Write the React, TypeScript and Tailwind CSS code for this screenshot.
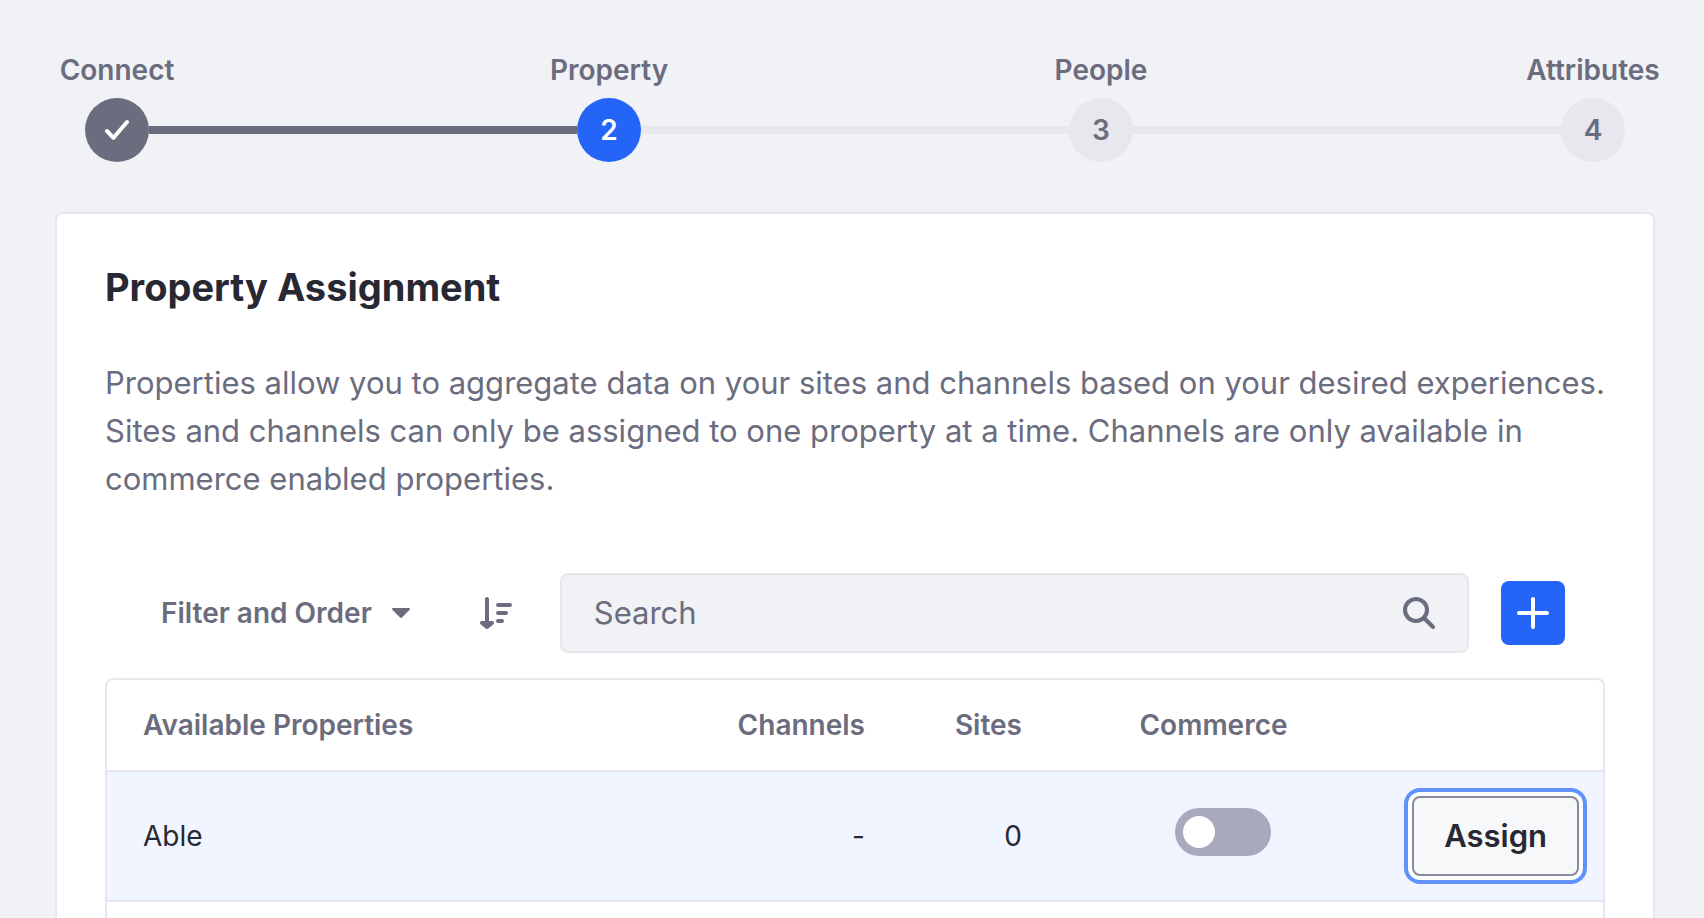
import { useState } from "react";

type StepState = "done" | "current" | "upcoming";

const steps: { label: string; state: StepState }[] = [
  { label: "Connect", state: "done" },
  { label: "Property", state: "current" },
  { label: "People", state: "upcoming" },
  { label: "Attributes", state: "upcoming" },
];

const circleStyles: Record<StepState, string> = {
  done: "bg-[#6b6c7e] text-white",
  current: "bg-[#2465f7] text-white",
  upcoming: "bg-[#e7e7ed] text-[#6b6c7e]",
};

function CheckIcon() {
  return (
    <svg className="size-6" viewBox="0 0 24 24" fill="none" stroke="currentColor" strokeWidth="4" strokeLinecap="round" strokeLinejoin="round" aria-hidden="true">
      <path d="M2 13 8.500 19.800 22 4" />
    </svg>
  );
}

function SortIcon() {
  return (
    <svg className="size-8" viewBox="0 0 32 32" fill="none" stroke="currentColor" strokeWidth="4" strokeLinecap="round" strokeLinejoin="round" aria-hidden="true">
      <path d="M7 2v26M18 8h12M18 16h8M18 24h4" />
      <path d="M2 26l5 4 5-4z" fill="currentColor" />
    </svg>
  );
}

function SearchIcon() {
  return (
    <svg className="size-8" viewBox="0 0 32 32" fill="none" stroke="currentColor" strokeWidth="4" strokeLinecap="round" aria-hidden="true">
      <circle cx="13" cy="13" r="11" />
      <path d="M22 22l8 8" />
    </svg>
  );
}

function PlusIcon() {
  return (
    <svg className="size-8" viewBox="0 0 32 32" fill="none" stroke="currentColor" strokeWidth="4" strokeLinecap="round" aria-hidden="true">
      <path d="M16 2v28M2 16h28" />
    </svg>
  );
}

function Stepper() {
  return (
    <ol className="mx-[30px] flex items-end">
      {steps.map((step, i) => (
        <li key={step.label} className={i > 0 ? "flex flex-1 items-end" : "flex items-end"}>
          {i > 0 && (
            <span className={`mb-7 h-2 flex-1 ${steps[i - 1].state === "done" ? "bg-[#6b6c7e]" : "bg-[#e7e7ed]"}`} />
          )}
          <div className="flex w-16 flex-col items-center gap-2">
            <span className="text-[28px] leading-10 font-semibold whitespace-nowrap text-[#6b6c7e]">{step.label}</span>
            <span className={`flex size-16 items-center justify-center rounded-full text-[28px] font-semibold ${circleStyles[step.state]}`}>
              {step.state === "done" ? <CheckIcon /> : i + 1}
            </span>
          </div>
        </li>
      ))}
    </ol>
  );
}

export default function App() {
  const [commerce, setCommerce] = useState(false);
  const [query, setQuery] = useState("");

  return (
    <main className="flex h-screen flex-col overflow-hidden bg-[#f1f2f5] pt-[50px] pr-[49px] pl-[55px] font-['Inter',sans-serif] text-[#272833]">
      <Stepper />

      <section className="mt-[50px] flex flex-1 flex-col rounded-t-lg border-2 border-b-0 border-[#e7e7ed] bg-white px-12">
        <h1 className="mt-[47px] text-[38px] leading-[52px] font-bold">Property Assignment</h1>
        <p className="mt-[46px] text-[31px] leading-12 text-[#6b6c7e]">
          Properties allow you to aggregate data on your sites and channels based on your desired experiences. Sites and
          channels can only be assigned to one property at a time. Channels are only available in commerce enabled
          properties.
        </p>

        <div className="mt-[70px] flex items-center pr-10 pl-14 text-[#6b6c7e]">
          <button type="button" className="flex items-center gap-5 text-[28px] font-semibold whitespace-nowrap">
            Filter and Order
            <svg className="h-[10px] w-[18px]" viewBox="0 0 18 10" fill="currentColor" aria-hidden="true">
              <path d="M1.200 0h15.600c1 0 1.500 1 .8 1.700L10 9.500c-.6.6-1.400.6-2 0L.4 1.700C-.3 1 .2 0 1.200 0z" />
            </svg>
          </button>
          <button type="button" aria-label="Reverse order" className="mr-12 ml-[70px]">
            <SortIcon />
          </button>
          <div className="flex h-20 flex-1 items-center rounded-lg border-2 border-[#e7e7ed] bg-[#f1f2f5] px-8">
            <input
              type="text"
              aria-label="Search"
              placeholder="Search"
              value={query}
              onChange={(e) => setQuery(e.target.value)}
              className="min-w-0 flex-1 bg-transparent text-[31px] outline-none placeholder:text-[#6b6c7e]"
            />
            <button type="button" aria-label="Submit search">
              <SearchIcon />
            </button>
          </div>
          <button type="button" aria-label="Add property" className="ml-8 flex size-16 items-center justify-center rounded-lg bg-[#2465f7] text-white">
            <PlusIcon />
          </button>
        </div>

        <div className="mt-[25px] flex-1 rounded-t-lg border-2 border-b-0 border-[#e7e7ed]">
          <table className="w-full table-fixed text-[28px]">
            <thead>
              <tr className="h-[91px] border-b-2 border-[#e7e7ed] text-[#6b6c7e]">
                <th scope="col" className="pl-9 text-left font-semibold">Available Properties</th>
                <th scope="col" className="w-[200px] pr-[15px] text-right font-semibold">Channels</th>
                <th scope="col" className="w-[157px] pr-[15px] text-right font-semibold">Sites</th>
                <th scope="col" className="w-[353px] text-center font-semibold">Commerce</th>
                <td className="w-[213px]" />
              </tr>
            </thead>
            <tbody>
              <tr className="h-[130px] border-b-2 border-[#e7e7ed] bg-[#f0f5ff]">
                <td className="pl-9">Able</td>
                <td className="pr-[15px] text-right">-</td>
                <td className="pr-[15px] text-right">0</td>
                <td className="pb-2 pl-[18px]">
                  <label className="mx-auto flex h-12 w-24 cursor-pointer items-center rounded-full bg-[#a7a9bc] px-2 has-checked:justify-end has-checked:bg-[#2465f7]">
                    <input
                      type="checkbox"
                      role="switch"
                      aria-label="Commerce"
                      checked={commerce}
                      onChange={(e) => setCommerce(e.target.checked)}
                      className="size-8 appearance-none rounded-full bg-white"
                    />
                  </label>
                </td>
                <td className="pr-6 text-right">
                  <button
                    type="button"
                    className="h-20 rounded-lg border-2 border-[#898a9b] bg-[#f7f8f9] px-[30px] text-[31px] font-semibold shadow-[0_0_0_4px_#ffffff,0_0_0_8px_#5f92fa]"
                  >
                    Assign
                  </button>
                </td>
              </tr>
            </tbody>
          </table>
        </div>
      </section>
    </main>
  );
}
